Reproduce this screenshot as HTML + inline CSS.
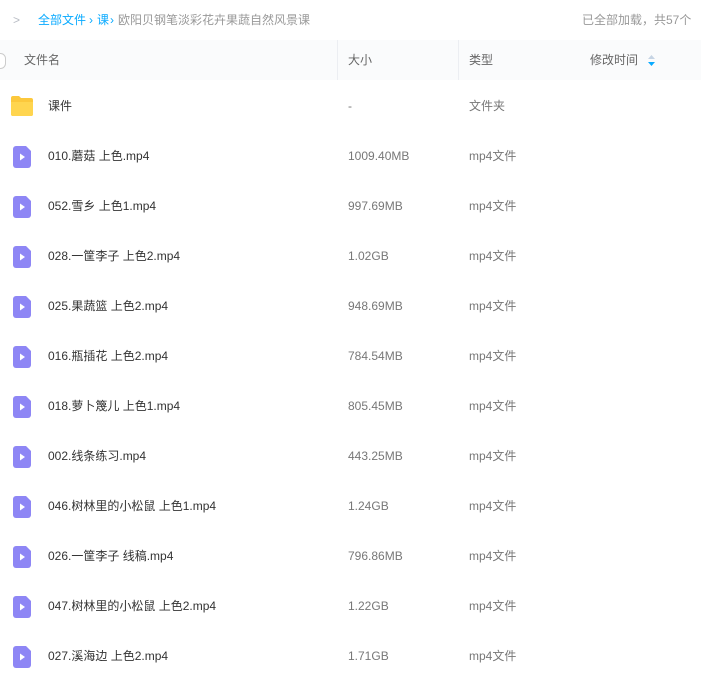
<!DOCTYPE html>
<html><head><meta charset="utf-8"><style>
body{margin:0;width:701px;height:656px;overflow:hidden;background:#fff;font-family:"Liberation Sans","Noto Sans CJK SC",sans-serif;font-size:12px;color:#424e67;position:relative}
.bc{position:absolute;top:11px;left:0;height:18px;line-height:18px;width:701px}
.hd{position:absolute;top:40px;left:0;width:701px;height:40px;background:#fafbfc;line-height:40px;color:#666}
.hd span,.r span{position:absolute}
.sep{position:absolute;top:0;width:1px;height:40px;background:#eceef2}
.r{position:absolute;left:0;width:701px;height:50px;line-height:50px;color:#333}
.r .c{color:#777}
.fi{position:absolute;left:12px;top:15px;width:20px;height:22px}
</style></head><body>
<div class="bc">
<span style="position:absolute;left:13px;color:#b8bcc4">&gt;</span>
<span style="position:absolute;left:38px;color:#09aaff">全部文件</span>
<span style="position:absolute;left:89px;color:#09aaff">›</span>
<span style="position:absolute;left:97px;color:#09aaff">课</span>
<span style="position:absolute;left:110px;color:#09aaff">›</span>
<span style="position:absolute;left:118px;color:#999">欧阳贝钢笔淡彩花卉果蔬自然风景课</span>
<span style="position:absolute;left:582px;color:#999">已全部加载，共57个</span>
</div>
<div class="hd">
<span style="left:24px">文件名</span><div class="sep" style="left:337px"></div>
<span style="left:348px">大小</span><div class="sep" style="left:458px"></div>
<span style="left:469px">类型</span>
<span style="left:590px">修改时间</span>
<svg style="position:absolute;left:648px;top:15px" width="7" height="11" viewBox="0 0 7 11"><path d="M3.5 0L7 4H0z" fill="#c6d4e4"/><path d="M3.5 11L7 7H0z" fill="#09aaff"/></svg>
<div style="position:absolute;left:-5px;top:13px;width:9px;height:14px;border:1px solid #ccc;border-radius:7px;background:#fff"></div>
</div>
<div id="rows"></div>
<script>
var d=[["课件","-","文件夹",1],["010.蘑菇 上色.mp4","1009.40MB"],["052.雪乡 上色1.mp4","997.69MB"],["028.一筐李子 上色2.mp4","1.02GB"],["025.果蔬篮 上色2.mp4","948.69MB"],["016.瓶插花 上色2.mp4","784.54MB"],["018.萝卜篾儿 上色1.mp4","805.45MB"],["002.线条练习.mp4","443.25MB"],["046.树林里的小松鼠 上色1.mp4","1.24GB"],["026.一筐李子 线稿.mp4","796.86MB"],["047.树林里的小松鼠 上色2.mp4","1.22GB"],["027.溪海边 上色2.mp4","1.71GB"]];
var h="";d.forEach(function(x,i){var t=81+i*50;
var ic=x[3]?'<svg class="fi" style="left:10px;top:14px;width:24px;height:22px" viewBox="0 0 24 22"><path d="M1 3a2 2 0 0 1 2-2h6l2 2h10a2 2 0 0 1 2 2v14a2 2 0 0 1-2 2H3a2 2 0 0 1-2-2z" fill="#fcc83c"/><path d="M1 7h22v12a2 2 0 0 1-2 2H3a2 2 0 0 1-2-2z" fill="#ffd54f"/></svg>':'<svg class="fi" viewBox="0 0 20 22"><path d="M4 0h10l5 5v14a3 3 0 0 1-3 3H4a3 3 0 0 1-3-3V3a3 3 0 0 1 3-3z" fill="#8e86f5"/><path d="M8 7.5l5 3.5-5 3.5z" fill="#fff"/></svg>';
h+='<div class="r" style="top:'+t+'px">'+ic+'<span style="left:48px">'+x[0]+'</span><span class="c" style="left:348px">'+x[1]+'</span><span class="c" style="left:469px">'+(x[2]||"mp4文件")+'</span></div>';});
document.getElementById("rows").innerHTML=h;
</script>
</body></html>
